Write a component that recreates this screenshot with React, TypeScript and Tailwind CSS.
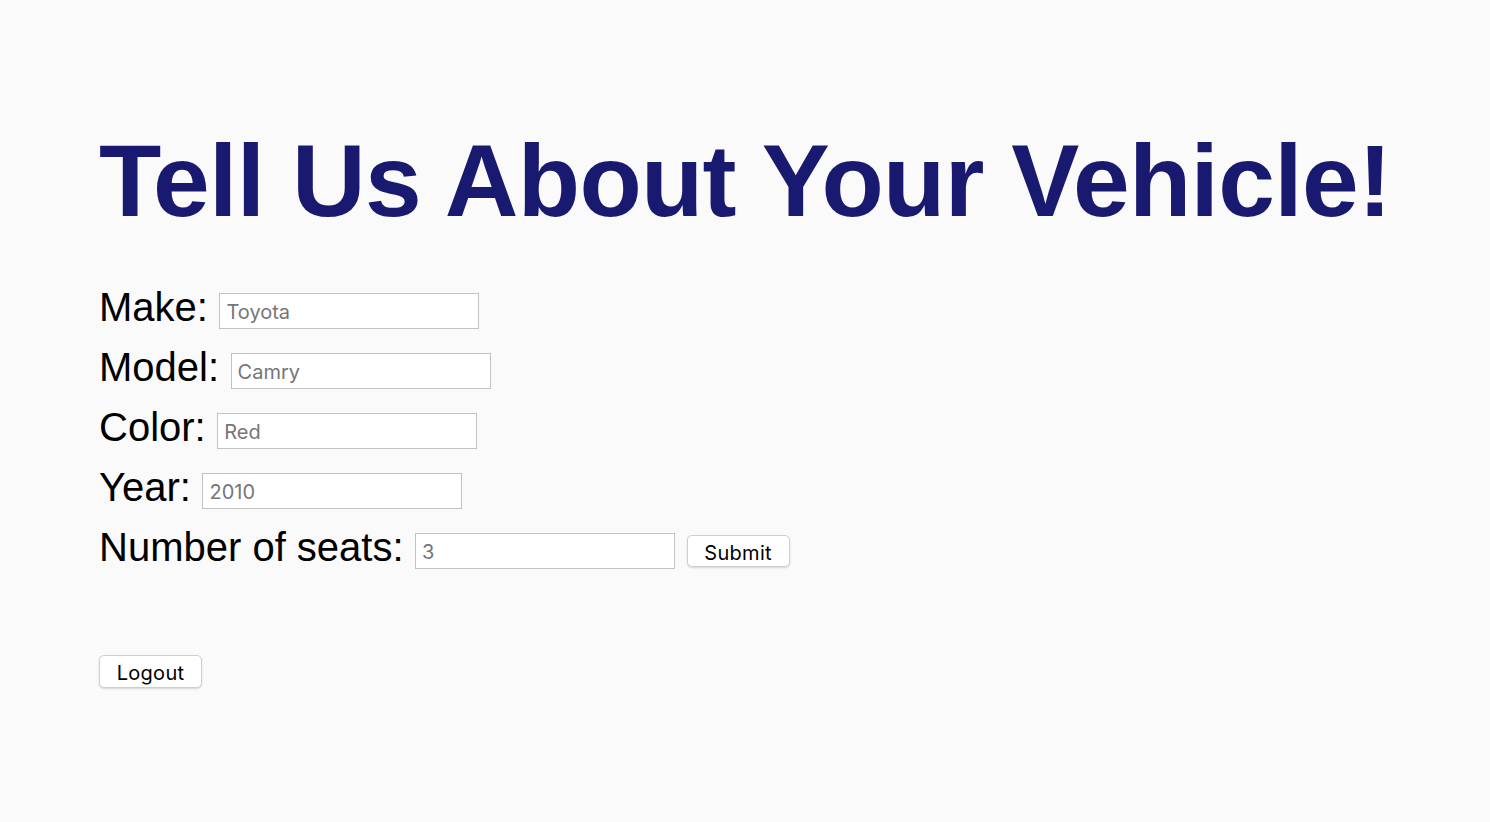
import React from "react";

const fields = [
  { label: "Make:", value: "Toyota" },
  { label: "Model:", value: "Camry" },
  { label: "Color:", value: "Red" },
  { label: "Year:", value: "2010" },
];

function Field({ label, value, children }: { label: string; value: string; children?: React.ReactNode }) {
  return (
    <div className="flex h-[60px] items-center gap-[11.5px]">
      <label className="mb-[9px] text-[40px] leading-[40px] text-black [font-family:'Liberation_Sans',Arial,sans-serif]">
        {label}
      </label>
      <input
        type="text"
        placeholder={value}
        className="h-[36px] w-[260px] border border-[#c2c2c2] bg-white px-[6px] pt-[2px] text-[20px] text-black placeholder:text-[#767676] outline-none [font-family:Inter,sans-serif]"
      />
      {children}
    </div>
  );
}

export default function App() {
  return (
    <div className="min-h-[822px] w-full bg-[#fafafa] px-[99px] pt-[130px]">
      <h1 className="whitespace-nowrap text-[102px] font-bold leading-[102px] tracking-[-0.7px] text-[#191970] [font-family:'Liberation_Sans',Arial,sans-serif]">
        Tell Us About Your Vehicle!
      </h1>
      <form className="mt-[49px] flex flex-col" onSubmit={(e) => e.preventDefault()}>
        {fields.map((f) => (
          <Field key={f.label} label={f.label} value={f.value} />
        ))}
        <Field label="Number of seats:" value="3">
          <button
            type="submit"
            className="h-[32px] w-[103px] rounded-[5px] border border-[#cfcfcf] bg-white pt-[2px] text-[20px] tracking-[0.3px] text-black shadow-[0_1px_2px_rgba(0,0,0,0.15)] [font-family:Inter,sans-serif]"
          >
            Submit
          </button>
        </Field>
      </form>
      <div className="mt-[74px]">
        <button
          type="button"
          className="h-[33px] w-[103px] rounded-[5px] border border-[#cfcfcf] bg-white pt-[2px] text-[20px] tracking-[0.3px] text-black shadow-[0_1px_2px_rgba(0,0,0,0.15)] [font-family:Inter,sans-serif]"
        >
          Logout
        </button>
      </div>
    </div>
  );
}
